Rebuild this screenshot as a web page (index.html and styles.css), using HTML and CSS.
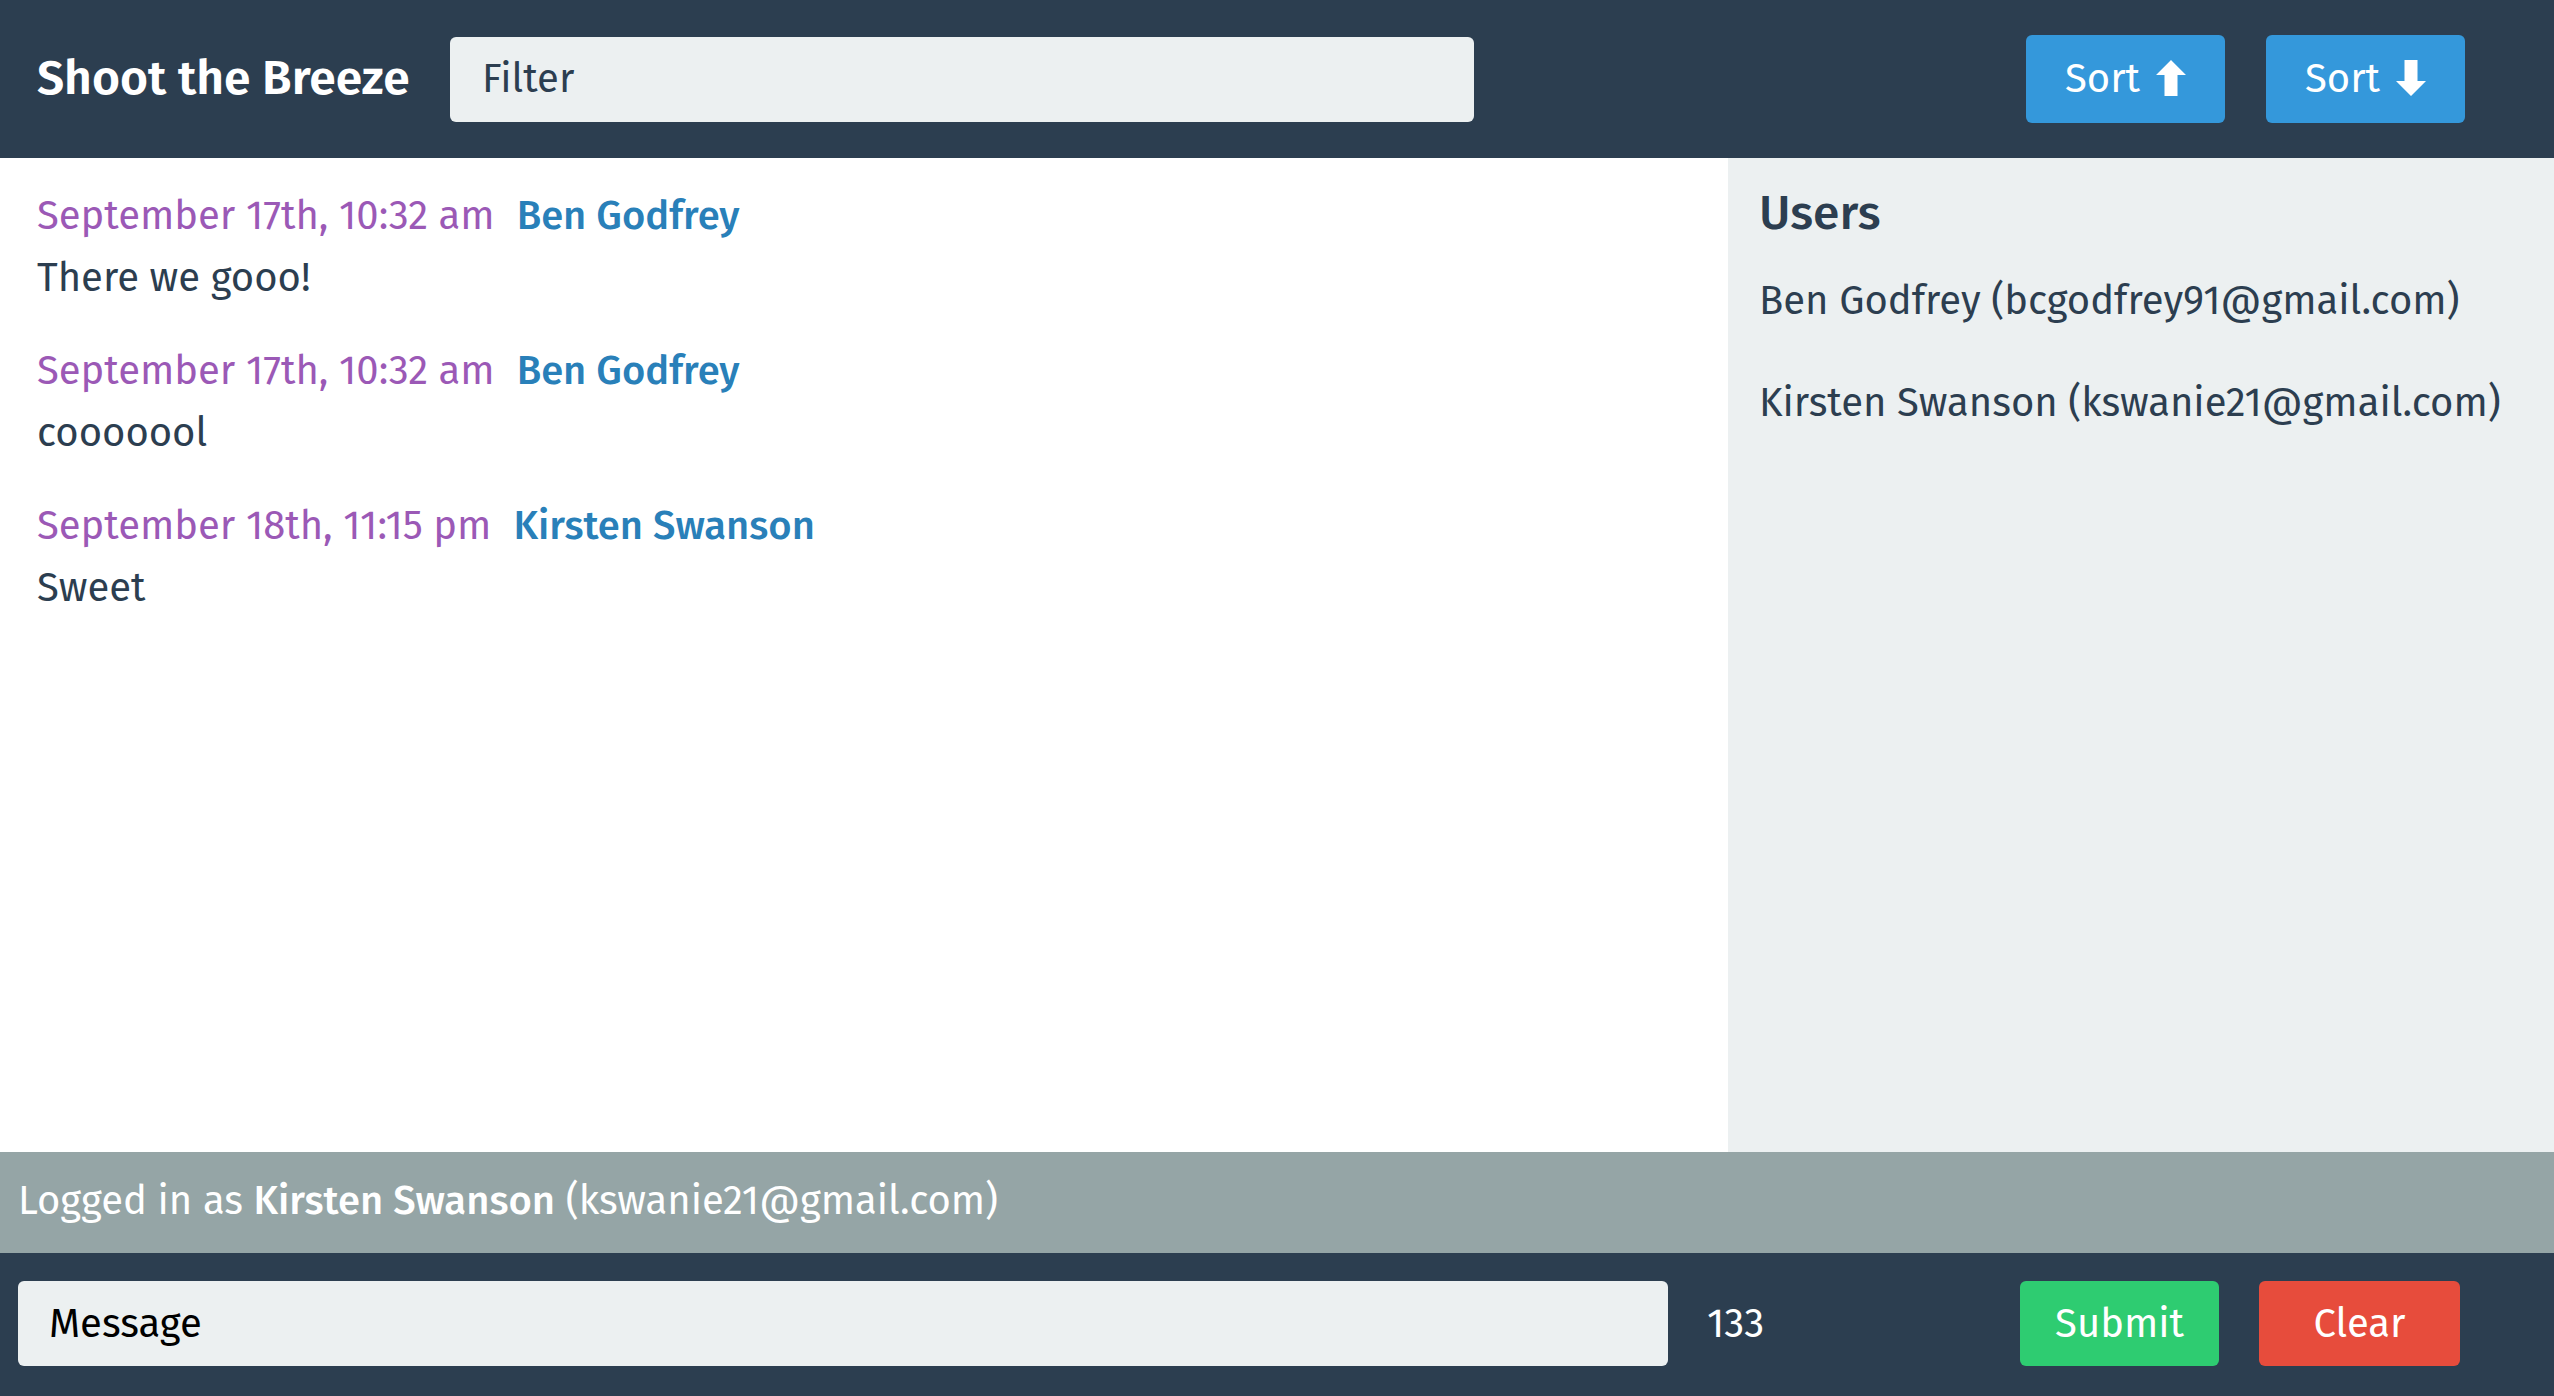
FILE: index.html
```html
<!DOCTYPE html>
<html>
<head>
<meta charset="utf-8">
<link rel="stylesheet" href="styles.css">
</head>
<body>
<div class="app">
  <header class="topbar">
    <h1 class="title">Shoot the Breeze</h1>
    <input class="filter" type="text" placeholder="Filter">
    <div class="spacer"></div>
    <button class="btn btn-blue">Sort <svg class="arrow" viewBox="0 0 30 36"><path d="M15 0 L30 15 L21.5 15 L21.5 36 L8.5 36 L8.5 15 L0 15 Z" fill="#fff"/></svg></button>
    <button class="btn btn-blue">Sort <svg class="arrow" viewBox="0 0 30 36"><path d="M8.5 0 L21.5 0 L21.5 21 L30 21 L15 36 L0 21 L8.5 21 Z" fill="#fff"/></svg></button>
  </header>
  <main class="main">
    <section class="messages">
      <div class="msg">
        <div class="meta"><span class="date">September 17th, 10:32 am</span><span class="name">Ben Godfrey</span></div>
        <div class="text">There we gooo!</div>
      </div>
      <div class="msg">
        <div class="meta"><span class="date">September 17th, 10:32 am</span><span class="name">Ben Godfrey</span></div>
        <div class="text">cooooool</div>
      </div>
      <div class="msg">
        <div class="meta"><span class="date">September 18th, 11:15 pm</span><span class="name">Kirsten Swanson</span></div>
        <div class="text">Sweet</div>
      </div>
    </section>
    <aside class="users">
      <h2 class="users-title">Users</h2>
      <div class="user">Ben Godfrey (bcgodfrey91@gmail.com)</div>
      <div class="user">Kirsten Swanson (kswanie21@gmail.com)</div>
    </aside>
  </main>
  <div class="status">Logged in as <strong>Kirsten Swanson</strong> (kswanie21@gmail.com)</div>
  <footer class="composer">
    <input class="message" type="text" placeholder="Message">
    <span class="count">133</span>
    <div class="spacer"></div>
    <button class="btn btn-green">Submit</button>
    <button class="btn btn-red">Clear</button>
  </footer>
</div>
</body>
</html>
```
FILE: styles.css
```css
* { box-sizing: border-box; }
html, body { margin: 0; padding: 0; height: 100%; }
body {
  font-family: "Fira Sans", "Roboto", "Noto Sans", sans-serif;
  color: #2c3e50;
}
.app {
  height: 100vh;
  display: flex;
  flex-direction: column;
}
.topbar {
  height: 158px;
  flex: none;
  background: #2c3e50;
  display: flex;
  align-items: center;
  padding: 0 89px 0 37px;
}
.title {
  margin: 0 0 2px;
  color: #fff;
  font-size: 48px;
  font-weight: 600;
  width: 413px;
}
.filter {
  width: 1024px;
  height: 85px;
  border: none;
  border-radius: 6px;
  background: #ecf0f1;
  font-family: inherit;
  font-size: 40px;
  color: #2c3e50;
  padding: 0 32px;
  outline: none;
}
.filter::placeholder { color: #2c3e50; }
.spacer { flex: 1; }
.btn {
  border: none;
  border-radius: 6px;
  color: #fff;
  font-family: inherit;
  font-size: 40px;
  width: 199px;
  height: 88px;
  display: flex;
  align-items: center;
  justify-content: center;
  gap: 16px;
  padding: 0;
}
.btn-blue { background: #3498db; }
.btn-blue + .btn-blue { margin-left: 41px; }
.arrow { width: 30px; height: 36px; margin-top: -2px; }
.main {
  flex: 1;
  display: grid;
  grid-template-columns: 1728px 1fr;
  min-height: 0;
}
.messages {
  background: #fff;
  padding: 27px 37px;
}
.msg { margin-bottom: 31px; }
.meta {
  display: flex;
  align-items: baseline;
  gap: 22px;
  height: 62px;
  line-height: 62px;
}
.date { color: #9b59b6; font-size: 40px; }
.name { color: #2980b9; font-size: 40px; font-weight: 500; }
.text { font-size: 40px; height: 62px; line-height: 62px; }
.users {
  background: #ecf0f1;
  padding: 24px 31px;
}
.users-title {
  margin: 0 0 26px;
  font-size: 48px;
  font-weight: 500;
  line-height: 62px;
}
.user {
  font-size: 40px;
  line-height: 62px;
  margin-bottom: 40px;
}
.status {
  height: 101px;
  flex: none;
  background: #95a5a6;
  color: #fff;
  font-size: 40px;
  display: flex;
  align-items: center;
  padding: 0 18px 3px;
  white-space: pre;
}
.status strong { font-weight: 500; }
.composer {
  height: 143px;
  flex: none;
  background: #2c3e50;
  display: flex;
  align-items: center;
  padding: 0 94px 2px 18px;
}
.message {
  width: 1650px;
  height: 85px;
  border: none;
  border-radius: 6px;
  background: #ecf0f1;
  font-family: inherit;
  font-size: 40px;
  color: #000;
  padding: 0 31px;
  outline: none;
}
.message::placeholder { color: #000; }
.count {
  color: #fff;
  font-size: 40px;
  margin-left: 39px;
}
.btn-green { background: #2ecc71; height: 85px; }
.btn-red { background: #e74c3c; height: 85px; margin-left: 40px; width: 201px; }
```
